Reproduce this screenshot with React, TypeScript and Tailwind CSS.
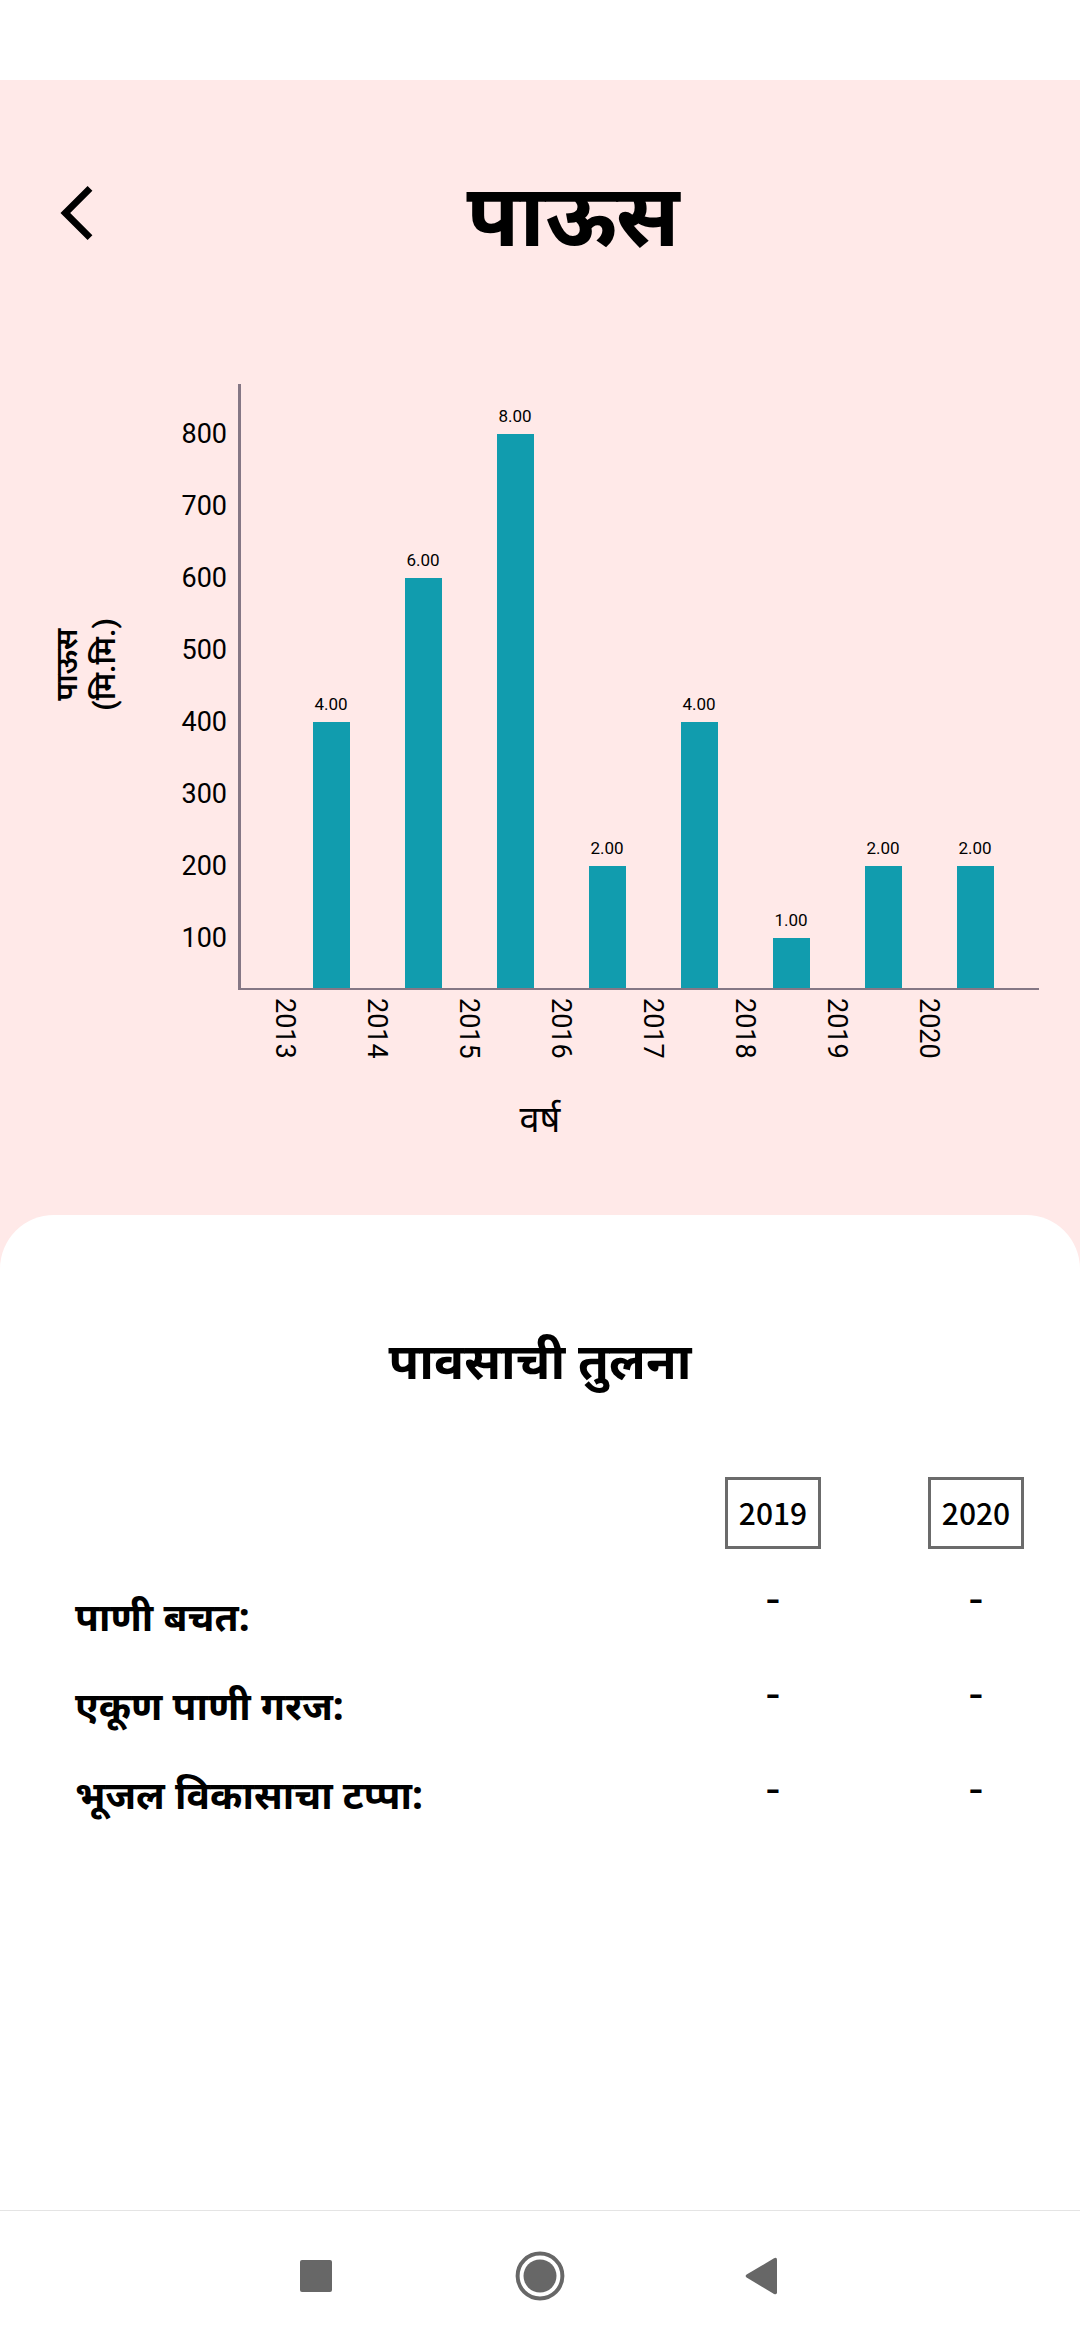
const RAINFALL = [
  { year: 2013, value: 4 },
  { year: 2014, value: 6 },
  { year: 2015, value: 8 },
  { year: 2016, value: 2 },
  { year: 2017, value: 4 },
  { year: 2018, value: 1 },
  { year: 2019, value: 2 },
  { year: 2020, value: 2 },
];

const TICKS = [800, 700, 600, 500, 400, 300, 200, 100];

// The value axis starts slightly above zero.
const UNIT = 72;
const AXIS_START = 22;

function Header() {
  return (
    <header className="flex items-center px-11 pt-20">
      <button type="button" aria-label="मागे" className="flex h-[106px] w-[66px] items-center justify-center">
        <svg width="34" height="56" viewBox="0 0 34 56" fill="none" stroke="#000" strokeWidth="6.8">
          <path d="M30 3.3 5.3 28 30 52.7" />
        </svg>
      </button>
      <h1 className="flex-1 text-center text-[86px] leading-[106px] font-bold">पाऊस</h1>
    </header>
  );
}

function Chart() {
  return (
    <section aria-label="पाऊस" className="pt-[118px] pr-[41px] pb-[68px] font-[Roboto,'Noto_Sans_Devanagari','Noto_Sans',sans-serif]">
      <div className="flex">
        <div className="flex w-[124px] items-center justify-end pb-[46px]">
          <p className="rotate-180 text-center text-[30px] leading-[38px] font-semibold [writing-mode:vertical-rl]">
            पाऊस
            <br />
            (मि.मि.)
          </p>
        </div>
        <ul className="w-[114px] pt-[14px] pr-[11px] text-right text-[27px]">
          {TICKS.map((t) => (
            <li key={t} className="h-[72px] leading-[72px]">
              {t}
            </li>
          ))}
        </ul>
        <div className="flex h-[606px] flex-1 items-end border-b-2 border-l-[3px] border-[#857785] pr-[18px] pl-11">
          {RAINFALL.map((d) => (
            <div key={d.year} className="flex flex-1 flex-col items-center">
              <span className="pb-2 text-[17px] leading-5">{d.value.toFixed(2)}</span>
              <div className="w-[37px] bg-[#119cae]" style={{ height: d.value * UNIT - AXIS_START }} />
            </div>
          ))}
        </div>
      </div>
      <div className="flex pt-2 pr-16 pl-[239px]">
        {RAINFALL.map((d) => (
          <div key={d.year} className="flex flex-1 justify-center">
            <span className="text-[27px] leading-8 [writing-mode:vertical-rl]">{d.year}</span>
          </div>
        ))}
      </div>
      <p className="pt-[34px] pl-[41px] text-center text-[36px] leading-[54px]">वर्ष</p>
    </section>
  );
}

function YearColumn({ year }: { year: number }) {
  return (
    <div className="flex w-24 flex-col items-center">
      <button
        type="button"
        className="h-[72px] w-24 border-[3px] border-[#6b6b6b] font-['Noto_Sans_CJK_SC',sans-serif] text-[30px] font-medium"
      >
        {year}
      </button>
      {["savings", "need", "groundwater"].map((k) => (
        <span key={k} className="h-[95px] text-[46px] leading-[92px]">
          -
        </span>
      ))}
    </div>
  );
}

function Comparison() {
  return (
    <section className="flex-1 rounded-t-[54px] bg-white px-14 pt-[109px]">
      <h2 className="text-center text-[50px] leading-[72px] font-bold">पावसाची तुलना</h2>
      <div className="flex justify-between pt-[81px] pl-[19px]">
        <div className="pt-[94px] text-[39px] leading-[89px] font-bold">
          <p>पाणी बचत:</p>
          <p>एकूण पाणी गरज:</p>
          <p>भूजल विकासाचा टप्पा:</p>
        </div>
        <div className="flex gap-[107px]">
          <YearColumn year={2019} />
          <YearColumn year={2020} />
        </div>
      </div>
    </section>
  );
}

function NavBar() {
  return (
    <nav className="flex h-[130px] items-center justify-center gap-[171px] border-t border-[#e4e4e4] bg-white text-[#676767]">
      <button type="button" aria-label="Recent apps">
        <svg width="50" height="50" viewBox="0 0 50 50" fill="currentColor">
          <rect x="6" y="9" width="32" height="32" rx="2" />
        </svg>
      </button>
      <button type="button" aria-label="Home">
        <svg width="50" height="50" viewBox="0 0 50 50" fill="currentColor">
          <circle cx="25" cy="25" r="22.4" fill="none" stroke="currentColor" strokeWidth="4" />
          <circle cx="25" cy="25" r="16.5" />
        </svg>
      </button>
      <button type="button" aria-label="Back">
        <svg width="50" height="50" viewBox="0 0 50 50" fill="currentColor">
          <path d="M10.6 23.6 38 7.3q3-1.4 3 1.6v32.4q0 3-3 1.6L10.6 26.6q-2-1.5 0-3Z" />
        </svg>
      </button>
    </nav>
  );
}

export default function App() {
  return (
    <div className="flex min-h-screen flex-col bg-white pt-20 font-['Noto_Sans','Noto_Sans_Devanagari',sans-serif] text-black">
      <main className="flex flex-1 flex-col bg-[#ffe9e8]">
        <Header />
        <Chart />
        <Comparison />
      </main>
      <NavBar />
    </div>
  );
}
